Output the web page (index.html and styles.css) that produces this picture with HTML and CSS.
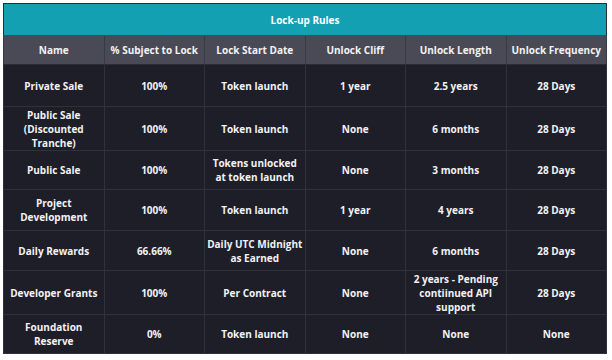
FILE: index.html
```html
<!DOCTYPE html>
<html lang="en">
<head>
<meta charset="utf-8">
<title>Lock-up Rules</title>
<link rel="stylesheet" href="styles.css">
</head>
<body>
<table class="rules">
  <colgroup>
    <col class="c1"><col class="c2"><col class="c3"><col class="c4"><col class="c5"><col class="c6">
  </colgroup>
  <thead>
    <tr class="title-row"><th colspan="6">Lock-up Rules</th></tr>
    <tr class="head-row">
      <th>Name</th>
      <th>% Subject to Lock</th>
      <th>Lock Start Date</th>
      <th>Unlock Cliff</th>
      <th>Unlock Length</th>
      <th>Unlock Frequency</th>
    </tr>
  </thead>
  <tbody>
    <tr class="r1">
      <td>Private Sale</td><td>100%</td><td>Token launch</td><td>1 year</td><td>2.5 years</td><td>28 Days</td>
    </tr>
    <tr class="r2">
      <td>Public Sale<br>(Discounted<br>Tranche)</td><td>100%</td><td>Token launch</td><td>None</td><td>6 months</td><td>28 Days</td>
    </tr>
    <tr class="r3">
      <td>Public Sale</td><td>100%</td><td>Tokens unlocked<br>at token launch</td><td>None</td><td>3 months</td><td>28 Days</td>
    </tr>
    <tr class="r4">
      <td>Project<br>Development</td><td>100%</td><td>Token launch</td><td>1 year</td><td>4 years</td><td>28 Days</td>
    </tr>
    <tr class="r5">
      <td>Daily Rewards</td><td>66.66%</td><td>Daily UTC Midnight<br>as Earned</td><td>None</td><td>6 months</td><td>28 Days</td>
    </tr>
    <tr class="r6">
      <td>Developer Grants</td><td>100%</td><td>Per Contract</td><td>None</td><td>2 years - Pending<br>contiinued API<br>support</td><td>28 Days</td>
    </tr>
    <tr class="r7">
      <td>Foundation<br>Reserve</td><td>0%</td><td>Token launch</td><td>None</td><td>None</td><td>None</td>
    </tr>
  </tbody>
</table>
</body>
</html>
```

FILE: styles.css
```css
html, body {
  margin: 0;
  padding: 0;
  background: #ffffff;
}
body {
  padding: 3px;
  font-family: "Open Sans", "DejaVu Sans", sans-serif;
}
.rules {
  width: 604px;
  border-collapse: collapse;
  table-layout: fixed;
  border: 1px solid #2a2c33;
  color: #f2f2f4;
  font-size: 10px;
  font-weight: 700;
  line-height: 14px;
  text-align: center;
}
.rules th,
.rules td {
  padding: 0 2px;
  vertical-align: middle;
}
.title-row th {
  height: 31px;
  background: #14a0b3;
  color: #ffffff;
  border-bottom: 1px solid #16606c;
}
.head-row th {
  height: 28px;
  background: #4a4a56;
  border-left: 1px solid #3a3a45;
  border-right: 1px solid #3a3a45;
  border-bottom: 1px solid #2a2b33;
}
.rules tbody td {
  background: #1d1e28;
  border: 1px solid #2f313b;
}
.r1 td { height: 41px; }
.r2 td { height: 43px; }
.r3 td { height: 38px; }
.r4 td { height: 40px; }
.r5 td { height: 39px; }
.r6 td { height: 43px; }
.r7 td { height: 38px; }
```
